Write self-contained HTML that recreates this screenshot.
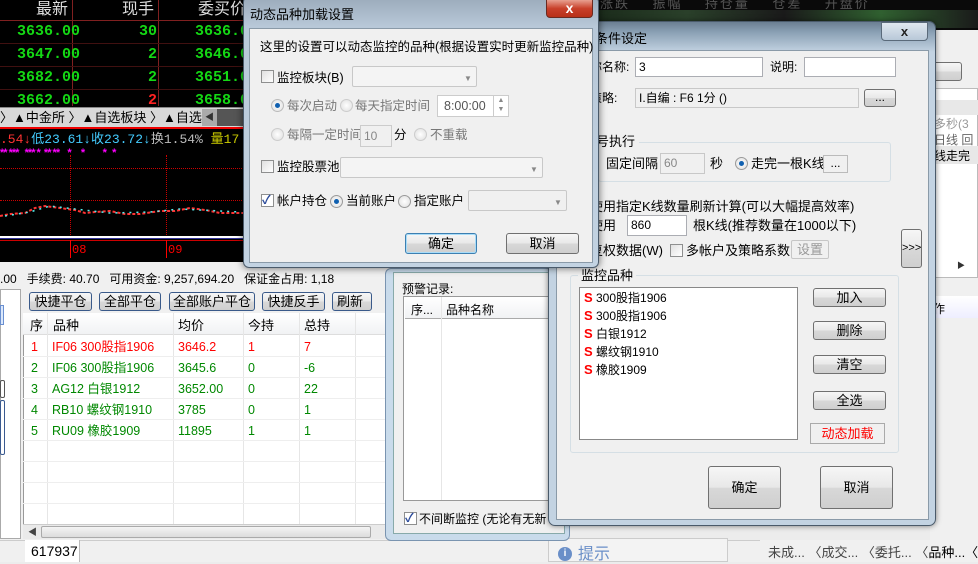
<!DOCTYPE html>
<html><head><meta charset="utf-8"><style>
*{margin:0;padding:0;box-sizing:border-box}
body{width:978px;height:562px;overflow:hidden;position:relative;background:#ececec;font-family:"Liberation Sans","Noto Sans CJK SC",sans-serif;font-size:12px;color:#000;line-height:15px}
.a{position:absolute;white-space:nowrap}
.btn{position:absolute;border:1px solid #707070;border-radius:3px;background:linear-gradient(#f6f6f6 0%,#e8e8e8 50%,#d8d8d8 51%,#cfcfcf 100%);text-align:center;font-size:12px}
.inp{position:absolute;background:#fff;border:1px solid #abadb3}
.dis{background:#f0f0f0;border-color:#c8c8c8;color:#888}
.cb{position:absolute;width:13px;height:13px;border:1px solid #8e8f8f;background:linear-gradient(135deg,#e0e0e0,#fff)}
.rd{position:absolute;width:13px;height:13px;border:1px solid #9a9a9a;border-radius:50%;background:radial-gradient(#fff,#ddd)}
.rd.on::after{content:"";position:absolute;left:3px;top:3px;width:5px;height:5px;border-radius:50%;background:#1060b0}
.g{color:#14d814}
.m{font-family:"Liberation Mono","Noto Sans CJK SC",monospace}
.r{font-size:12.5px;line-height:15px}
</style></head><body>

<!-- top black quote area -->
<div class="a" style="left:0;top:0;width:250px;height:262px;background:#000"></div>
<div class="a" style="left:590px;top:0;width:388px;height:30px;background:#0a0a0a"></div>
<div class="a" style="left:590px;top:10px;width:388px;height:18px;background:linear-gradient(90deg,#1a2a1a,#2a402a,#1a1a1a,#306030,#1a1a1a)"></div>
<div class="a" style="left:600px;top:-4px;color:#555;font-size:13px;letter-spacing:2px">涨跌 &nbsp;&nbsp; 振幅 &nbsp;&nbsp; 持仓量 &nbsp;&nbsp; 仓差 &nbsp;&nbsp; 开盘价</div>
<div class="a" style="left:72px;top:0;width:1px;height:106px;background:#802020"></div>
<div class="a" style="left:158px;top:0;width:1px;height:106px;background:#802020"></div>
<div class="a" style="left:0;top:20px;width:250px;height:1px;background:#802020"></div>
<div class="a" style="left:0;top:43px;width:250px;height:1px;background:#401010"></div>
<div class="a" style="left:0;top:66px;width:250px;height:1px;background:#401010"></div>
<div class="a" style="left:0;top:89px;width:250px;height:1px;background:#401010"></div>
<div class="a" style="left:36px;top:1px;color:#ddd;font-size:16px;line-height:18px">最新</div>
<div class="a" style="left:122px;top:1px;color:#ddd;font-size:16px;line-height:18px">现手</div>
<div class="a" style="left:198px;top:1px;color:#ddd;font-size:16px;line-height:18px">委买价</div>
<div class="a m g" style="left:17px;top:24px;font-size:15px;font-weight:bold">3636.00</div>
<div class="a m g" style="left:139px;top:24px;font-size:15px;font-weight:bold">30</div>
<div class="a m g" style="left:195px;top:24px;font-size:15px;font-weight:bold">3636.00</div>
<div class="a m g" style="left:17px;top:47px;font-size:15px;font-weight:bold">3647.00</div>
<div class="a m g" style="left:148px;top:47px;font-size:15px;font-weight:bold">2</div>
<div class="a m g" style="left:195px;top:47px;font-size:15px;font-weight:bold">3646.00</div>
<div class="a m g" style="left:17px;top:70px;font-size:15px;font-weight:bold">3682.00</div>
<div class="a m g" style="left:148px;top:70px;font-size:15px;font-weight:bold">2</div>
<div class="a m g" style="left:195px;top:70px;font-size:15px;font-weight:bold">3651.00</div>
<div class="a m g" style="left:17px;top:93px;font-size:15px;font-weight:bold">3662.00</div>
<div class="a m" style="left:148px;top:93px;font-size:15px;font-weight:bold;color:#f22">2</div>
<div class="a m g" style="left:195px;top:93px;font-size:15px;font-weight:bold">3658.00</div>
<!-- tab bar -->
<div class="a" style="left:0;top:107px;width:250px;height:20px;background:#d8d8d8;border-top:1px solid #888"></div>
<div class="a" style="left:0;top:110px;font-size:13px">〉▲中金所 〉▲自选板块 〉▲自选股</div>
<div class="a" style="left:202px;top:109px;width:15px;height:17px;background:#aaa;color:#333;font-size:9px;text-align:center;line-height:17px">◀</div>
<div class="a" style="left:217px;top:109px;width:33px;height:17px;background:#555"></div>
<div class="a" style="left:0;top:127px;width:250px;height:2px;background:#e00"></div>
<div class="a m" style="left:0;top:132px;font-size:13px;color:#f33">.54<span style="color:#f33">↓</span><span style="color:#4cf">低23.61↓收23.72↓</span><span style="color:#bbb">换1.54%</span> <span style="color:#cc0">量17</span></div>
<div class="a" style="left:0;top:146px;color:#f0f;font-size:11px;font-weight:bold;letter-spacing:-1px">** ***&nbsp;&nbsp; *** *&nbsp; ** **&nbsp;&nbsp;&nbsp; *&nbsp;&nbsp;&nbsp;&nbsp; *&nbsp;&nbsp;&nbsp;&nbsp;&nbsp;&nbsp;&nbsp;&nbsp; *&nbsp;&nbsp; *</div>
<div class="a" style="left:0;top:168px;width:250px;border-top:1px dotted #c00"></div>
<div class="a" style="left:0;top:200px;width:250px;border-top:1px dotted #c00"></div>
<div class="a" style="left:70px;top:155px;height:80px;border-left:1px dotted #c00"></div>
<div class="a" style="left:166px;top:155px;height:80px;border-left:1px dotted #c00"></div>
<svg class="a" style="left:0;top:200px" width="245" height="20"><polyline points="0,16 10,14 25,13 35,8 45,6 60,8 75,10 85,13 95,12 110,11 125,14 140,14 160,11 175,11 190,8 205,10 220,13 245,13" fill="none" stroke="#f33" stroke-width="2" stroke-dasharray="3,2"/><polyline points="5,16 30,12 50,6 75,9 110,13 150,12 180,9 200,10 240,12" fill="none" stroke="#5ee" stroke-width="1.5" stroke-dasharray="2,5"/></svg>
<div class="a" style="left:0;top:236px;width:250px;height:2px;background:#fff"></div>
<div class="a" style="left:0;top:238px;width:250px;height:1px;background:#339"></div>
<div class="a" style="left:0;top:240px;width:250px;height:1px;background:#c00"></div>
<div class="a" style="left:70px;top:240px;height:18px;border-left:1px solid #f00"></div>
<div class="a" style="left:166px;top:240px;height:18px;border-left:1px solid #f00"></div>
<div class="a m" style="left:72px;top:243px;color:#f00;font-size:12px">08</div>
<div class="a m" style="left:168px;top:243px;color:#f00;font-size:12px">09</div>

<!-- lower trade window -->
<div class="a" style="left:0;top:262px;width:560px;height:300px;background:#f0f0f0"></div>
<div class="a" style="left:0;top:272px;font-size:12px">.00 &nbsp; 手续费: 40.70 &nbsp; 可用资金: 9,257,694.20 &nbsp; 保证金占用: 1,18</div>
<div class="a" style="left:0;top:289px;width:21px;height:250px;background:#fff;border:1px solid #aaa"></div>
<div class="a" style="left:0;top:305px;width:4px;height:20px;border:1px solid #6a8fd0;background:#dbe8fb"></div>
<div class="a" style="left:0;top:380px;width:5px;height:18px;border:1px solid #555;border-radius:2px"></div>
<div class="a" style="left:0;top:400px;width:5px;height:55px;border:1px solid #3a5a90;border-radius:2px"></div>
<div class="btn" style="left:29px;top:292px;width:63px;height:19px;line-height:17px;font-size:13px;border-color:#3a5a8a">快捷平仓</div>
<div class="btn" style="left:99px;top:292px;width:62px;height:19px;line-height:17px;font-size:13px;border-color:#3a5a8a">全部平仓</div>
<div class="btn" style="left:169px;top:292px;width:86px;height:19px;line-height:17px;font-size:13px;border-color:#3a5a8a">全部账户平仓</div>
<div class="btn" style="left:262px;top:292px;width:63px;height:19px;line-height:17px;font-size:13px;border-color:#3a5a8a">快捷反手</div>
<div class="btn" style="left:332px;top:292px;width:40px;height:19px;line-height:17px;font-size:13px;border-color:#3a5a8a;text-align:left;padding-left:4px">刷新</div>
<div class="a" style="left:23px;top:313px;width:367px;height:211px;background:#fff;border-left:1px solid #999"></div>
<div class="a" style="left:23px;top:313px;width:367px;height:22px;background:linear-gradient(#fff,#f1f2f4);border-bottom:1px solid #ddd"></div>
<div class="a" style="left:30px;top:318px;font-size:13px">序</div>
<div class="a" style="left:53px;top:318px;font-size:13px">品种</div>
<div class="a" style="left:178px;top:318px;font-size:13px">均价</div>
<div class="a" style="left:248px;top:318px;font-size:13px">今持</div>
<div class="a" style="left:304px;top:318px;font-size:13px">总持</div>
<div class="a" style="left:47px;top:313px;height:211px;border-left:1px solid #e6e6e6"></div>
<div class="a" style="left:173px;top:313px;height:211px;border-left:1px solid #e6e6e6"></div>
<div class="a" style="left:243px;top:313px;height:211px;border-left:1px solid #e6e6e6"></div>
<div class="a" style="left:299px;top:313px;height:211px;border-left:1px solid #e6e6e6"></div>
<div class="a" style="left:355px;top:313px;height:211px;border-left:1px solid #e6e6e6"></div>
<div class="a" style="left:23px;top:356px;width:367px;border-top:1px solid #eee"></div>
<div class="a" style="left:23px;top:377px;width:367px;border-top:1px solid #eee"></div>
<div class="a" style="left:23px;top:398px;width:367px;border-top:1px solid #eee"></div>
<div class="a" style="left:23px;top:419px;width:367px;border-top:1px solid #eee"></div>
<div class="a" style="left:23px;top:440px;width:367px;border-top:1px solid #eee"></div>
<div class="a" style="left:23px;top:461px;width:367px;border-top:1px solid #eee"></div>
<div class="a" style="left:23px;top:482px;width:367px;border-top:1px solid #eee"></div>
<div class="a" style="left:23px;top:503px;width:367px;border-top:1px solid #eee"></div>
<div class="a r" style="left:31px;top:340px;color:#f00">1</div><div class="a r" style="left:52px;top:340px;color:#f00">IF06 300股指1906</div><div class="a r" style="left:178px;top:340px;color:#f00">3646.2</div><div class="a r" style="left:248px;top:340px;color:#f00">1</div><div class="a r" style="left:304px;top:340px;color:#f00">7</div>
<div class="a r" style="left:31px;top:361px;color:#080">2</div><div class="a r" style="left:52px;top:361px;color:#080">IF06 300股指1906</div><div class="a r" style="left:178px;top:361px;color:#080">3645.6</div><div class="a r" style="left:248px;top:361px;color:#080">0</div><div class="a r" style="left:304px;top:361px;color:#080">-6</div>
<div class="a r" style="left:31px;top:382px;color:#080">3</div><div class="a r" style="left:52px;top:382px;color:#080">AG12 白银1912</div><div class="a r" style="left:178px;top:382px;color:#080">3652.00</div><div class="a r" style="left:248px;top:382px;color:#080">0</div><div class="a r" style="left:304px;top:382px;color:#080">22</div>
<div class="a r" style="left:31px;top:403px;color:#080">4</div><div class="a r" style="left:52px;top:403px;color:#080">RB10 螺纹钢1910</div><div class="a r" style="left:178px;top:403px;color:#080">3785</div><div class="a r" style="left:248px;top:403px;color:#080">0</div><div class="a r" style="left:304px;top:403px;color:#080">1</div>
<div class="a r" style="left:31px;top:424px;color:#080">5</div><div class="a r" style="left:52px;top:424px;color:#080">RU09 橡胶1909</div><div class="a r" style="left:178px;top:424px;color:#080">11895</div><div class="a r" style="left:248px;top:424px;color:#080">1</div><div class="a r" style="left:304px;top:424px;color:#080">1</div>
<div class="a" style="left:23px;top:524px;width:367px;height:15px;background:#eaeaea;border-top:1px solid #ccc"></div>
<div class="a" style="left:41px;top:526px;width:330px;height:12px;background:linear-gradient(#f4f4f4,#dcdcdc);border:1px solid #aaa;border-radius:2px"></div>
<div class="a" style="left:28px;top:525px;font-size:9px;color:#444">◀</div>
<div class="a" style="left:0;top:540px;width:978px;height:22px;background:#f0f0f0;border-top:1px solid #ccc"></div>
<div class="a" style="left:25px;top:540px;width:55px;height:22px;background:#fff;border-right:1px solid #bbb"></div>
<div class="a" style="left:31px;top:543px;font-size:14px;line-height:16px">617937</div>

<!-- right strip window -->
<div class="a" style="left:930px;top:30px;width:48px;height:510px;background:#f0f0f0"></div>
<div class="btn" style="left:922px;top:62px;width:40px;height:19px"></div>
<div class="a" style="left:930px;top:88px;width:48px;height:190px;background:#fff;border:1px solid #bbb"></div>
<div class="a" style="left:930px;top:100px;width:48px;height:15px;background:#e8e8e8"></div>
<div class="a" style="left:934px;top:117px;color:#999;font-size:12px">多秒(3</div>
<div class="a" style="left:934px;top:133px;color:#666;font-size:12px">日线 回</div>
<div class="a" style="left:932px;top:146px;width:46px;height:18px;background:#e8e8e8"></div>
<div class="a" style="left:934px;top:149px;font-size:12px">线走完</div>
<div class="a" style="left:957px;top:258px;font-size:8px;color:#333">▶</div>
<div class="a" style="left:930px;top:296px;width:48px;height:22px;background:linear-gradient(#fff,#eef)"></div>
<div class="a" style="left:933px;top:302px;font-size:12px">作</div>
<!-- status tabs -->
<div class="a" style="left:548px;top:538px;width:180px;height:24px;background:#f3f3f3;border:1px solid #ccc"></div>
<div class="a" style="left:558px;top:547px;width:14px;height:14px;border-radius:50%;background:#6a8fc8;color:#fff;font-size:10px;text-align:center;line-height:14px;font-weight:bold">i</div>
<div class="a" style="left:578px;top:546px;font-size:16px;color:#6a8fc8;line-height:18px">提示</div>
<div class="a" style="left:760px;top:540px;width:218px;height:22px;background:#f0f0f0"></div>
<div class="a" style="left:768px;top:545px;font-size:13px;color:#444">未成... 〈成交... 〈委托... 〈<span style="color:#000">品种...〈下单</span></div>

<!-- middle warning dialog -->
<div class="a" style="left:385px;top:268px;width:185px;height:273px;background:#c9dbeb;border:1px solid #7a94b0;border-radius:6px"></div>
<div class="a" style="left:393px;top:272px;width:172px;height:262px;background:#f0f0f0;border:1px solid #8aa"></div>
<div class="a" style="left:402px;top:282px;font-size:12px">预警记录:</div>
<div class="a" style="left:403px;top:296px;width:160px;height:205px;background:#fff;border:1px solid #999"></div>
<div class="a" style="left:405px;top:297px;width:158px;height:22px;background:linear-gradient(#fff,#f1f2f4);border-bottom:1px solid #aaa"></div>
<div class="a" style="left:411px;top:303px;font-size:12px">序...</div>
<div class="a" style="left:441px;top:297px;height:203px;border-left:1px solid #e6e6e6"></div>
<div class="a" style="left:446px;top:303px;font-size:12px">品种名称</div>
<div class="cb" style="left:404px;top:512px;background:#fff"></div>
<div class="a" style="left:405px;top:511px;color:#2a4a9a;font-size:12px;font-weight:bold">✓</div>
<div class="a" style="left:419px;top:512px;font-size:12px">不间断监控 (无论有无新</div>

<!-- big dialog 条件设定 -->
<div class="a" style="left:548px;top:21px;width:388px;height:505px;border-radius:7px;border:1px solid #4a5a6a;background:linear-gradient(#6b7f92 0px,#8aa0b4 10px,#c3d3e2 30px,#c3d3e2 100%);box-shadow:0 0 6px rgba(0,0,0,.5)"></div>
<div class="a" style="left:595px;top:31px;font-size:13px;color:#000">条件设定</div>
<div class="a" style="left:881px;top:22px;width:47px;height:19px;border:1px solid #5a6a7a;border-radius:0 0 4px 4px;background:linear-gradient(#e0e8f0,#b8c8d8);color:#222;font-weight:bold;text-align:center;line-height:17px;font-size:13px">x</div>
<div class="a" style="left:556px;top:50px;width:373px;height:470px;background:#f0f0f0;border:1px solid #8a9aa8"></div>
<div class="a" style="left:590px;top:60px">称名称:</div>
<div class="inp" style="left:635px;top:57px;width:128px;height:20px;padding:2px 3px">3</div>
<div class="a" style="left:770px;top:60px">说明:</div>
<div class="inp" style="left:804px;top:57px;width:92px;height:20px"></div>
<div class="a" style="left:590px;top:91px">策略:</div>
<div class="inp dis" style="left:635px;top:88px;width:224px;height:20px;padding:2px 3px;color:#000">I.自编 : F6 1分 ()</div>
<div class="btn" style="left:864px;top:89px;width:32px;height:18px;line-height:14px">...</div>
<div class="a" style="left:598px;top:142px;width:293px;height:40px;border:1px solid #d5dfe5;border-radius:3px"></div>
<div class="a" style="left:596px;top:134px;background:#f0f0f0;padding-right:4px;font-size:13px">号执行</div>
<div class="a" style="left:606px;top:156px;font-size:13px">固定间隔</div>
<div class="inp dis" style="left:660px;top:153px;width:45px;height:21px;padding:2px 3px">60</div>
<div class="a" style="left:710px;top:156px;font-size:13px">秒</div>
<div class="rd on" style="left:735px;top:157px"></div>
<div class="a" style="left:751px;top:156px;font-size:13px">走完一根K线</div>
<div class="a" style="left:823px;top:155px;width:25px;height:18px;border:1px solid #bbb;text-align:center;line-height:14px">...</div>
<div class="a" style="left:590px;top:199px;font-size:13px">使用指定K线数量刷新计算(可以大幅提高效率)</div>
<div class="a" style="left:590px;top:218px;font-size:13px">使用</div>
<div class="inp" style="left:627px;top:215px;width:60px;height:21px;padding:2px 3px">860</div>
<div class="a" style="left:693px;top:218px;font-size:13px">根K线(推荐数量在1000以下)</div>
<div class="a" style="left:590px;top:243px;font-size:13px">复权数据(W)</div>
<div class="cb" style="left:670px;top:244px"></div>
<div class="a" style="left:686px;top:243px;font-size:13px">多帐户及策略系数</div>
<div class="a" style="left:791px;top:240px;width:38px;height:19px;border:1px solid #c6c6c6;border-radius:2px;text-align:center;line-height:17px;color:#999;font-size:13px">设置</div>
<div class="btn" style="left:901px;top:229px;width:21px;height:39px;line-height:37px;font-size:11px">&gt;&gt;&gt;</div>
<div class="a" style="left:570px;top:275px;width:329px;height:178px;border:1px solid #d5dfe5;border-radius:3px"></div>
<div class="a" style="left:578px;top:268px;background:#f0f0f0;padding:0 3px;font-size:13px">监控品种</div>
<div class="a" style="left:579px;top:287px;width:219px;height:153px;background:#fff;border:1px solid #888"></div>
<div class="a" style="left:584px;top:289px;line-height:17px;font-size:12px"><b style="color:#f00;font-size:13px">S</b> 300股指1906<br><b style="color:#f00;font-size:13px">S</b> 300股指1906<br><b style="color:#f00;font-size:13px">S</b> 白银1912<br><b style="color:#f00;font-size:13px">S</b> 螺纹钢1910<br><b style="color:#f00;font-size:13px">S</b> 橡胶1909</div>
<div class="btn" style="left:813px;top:288px;width:73px;height:19px;line-height:17px;font-size:13px">加入</div>
<div class="btn" style="left:813px;top:321px;width:73px;height:19px;line-height:17px;font-size:13px">删除</div>
<div class="btn" style="left:813px;top:355px;width:73px;height:19px;line-height:17px;font-size:13px">清空</div>
<div class="btn" style="left:813px;top:391px;width:73px;height:19px;line-height:17px;font-size:13px">全选</div>
<div class="a" style="left:810px;top:423px;width:75px;height:21px;border:1px solid #aaa;text-align:center;line-height:19px;color:#f00;font-size:13px">动态加载</div>
<div class="btn" style="left:708px;top:466px;width:73px;height:43px;line-height:41px;font-size:13px">确定</div>
<div class="btn" style="left:820px;top:466px;width:73px;height:43px;line-height:41px;font-size:13px">取消</div>

<!-- small dialog 动态品种加载设置 -->
<div class="a" style="left:243px;top:-4px;width:356px;height:272px;border-radius:6px;border:1px solid #4a5a6a;background:linear-gradient(#9aaaba,#b8c8d8 30px,#c3d3e2);box-shadow:0 0 8px rgba(0,0,0,.6)"></div>
<div class="a" style="left:250px;top:7px;font-size:13px">动态品种加载设置</div>
<div class="a" style="left:546px;top:-1px;width:47px;height:19px;border:1px solid #6a2a20;border-radius:0 0 4px 4px;background:linear-gradient(#e8a090,#c8402a 50%,#b83018);color:#fff;font-weight:bold;text-align:center;line-height:17px;font-size:14px">x</div>
<div class="a" style="left:249px;top:28px;width:344px;height:235px;background:#f0f0f0;border:1px solid #8a9aa8"></div>
<div class="a" style="left:260px;top:40px;font-size:12.5px">这里的设置可以动态监控的品种(根据设置实时更新监控品种)</div>
<div class="cb" style="left:261px;top:70px"></div>
<div class="a" style="left:277px;top:71px;font-size:12.5px">监控板块(B)</div>
<div class="a" style="left:352px;top:66px;width:125px;height:21px;border:1px solid #c8c8c8;border-radius:2px;background:#f4f4f4"></div>
<div class="a" style="left:464px;top:71px;font-size:8px;color:#888">▼</div>
<div class="rd on" style="left:271px;top:99px;border-color:#bbb"></div>
<div class="a" style="left:287px;top:99px;color:#777;font-size:12.5px">每次启动</div>
<div class="rd" style="left:340px;top:99px;border-color:#ccc"></div>
<div class="a" style="left:355px;top:99px;color:#777;font-size:12.5px">每天指定时间</div>
<div class="a" style="left:437px;top:95px;width:72px;height:22px;border:1px solid #ccc;background:#fff;padding:3px 0 0 6px;color:#555;font-size:12.5px">8:00:00</div>
<div class="a" style="left:493px;top:96px;width:15px;height:20px;border-left:1px solid #ccc;font-size:7px;color:#888;text-align:center;line-height:9px">▲<br>▼</div>
<div class="rd" style="left:271px;top:128px;border-color:#ccc"></div>
<div class="a" style="left:287px;top:128px;color:#777;font-size:12.5px">每隔一定时间</div>
<div class="a" style="left:360px;top:125px;width:32px;height:22px;border:1px solid #ccc;padding:3px 3px;color:#888">10</div>
<div class="a" style="left:394px;top:128px;font-size:12.5px">分</div>
<div class="rd" style="left:414px;top:128px;border-color:#ccc"></div>
<div class="a" style="left:430px;top:128px;color:#777;font-size:12.5px">不重载</div>
<div class="cb" style="left:261px;top:160px"></div>
<div class="a" style="left:277px;top:160px;font-size:12.5px">监控股票池</div>
<div class="a" style="left:340px;top:157px;width:203px;height:21px;border:1px solid #c8c8c8;border-radius:2px;background:#f4f4f4"></div>
<div class="a" style="left:530px;top:162px;font-size:8px;color:#888">▼</div>
<div class="cb" style="left:261px;top:194px;background:#fff"></div>
<div class="a" style="left:262px;top:193px;color:#2a4a9a;font-weight:bold;font-size:12px">✓</div>
<div class="a" style="left:277px;top:194px;font-size:12.5px">帐户持仓</div>
<div class="rd on" style="left:330px;top:195px"></div>
<div class="a" style="left:346px;top:194px;font-size:12.5px">当前账户</div>
<div class="rd" style="left:398px;top:195px"></div>
<div class="a" style="left:414px;top:194px;font-size:12.5px">指定账户</div>
<div class="a" style="left:468px;top:190px;width:99px;height:21px;border:1px solid #c8c8c8;border-radius:2px;background:#f0f0f0"></div>
<div class="a" style="left:554px;top:195px;font-size:8px;color:#888">▼</div>
<div class="btn" style="left:405px;top:233px;width:72px;height:21px;line-height:19px;font-size:13px;border-color:#3c7fb1;box-shadow:inset 0 0 0 1px #a8dcf8">确定</div>
<div class="btn" style="left:506px;top:233px;width:73px;height:21px;line-height:19px;font-size:13px">取消</div>
</body></html>
